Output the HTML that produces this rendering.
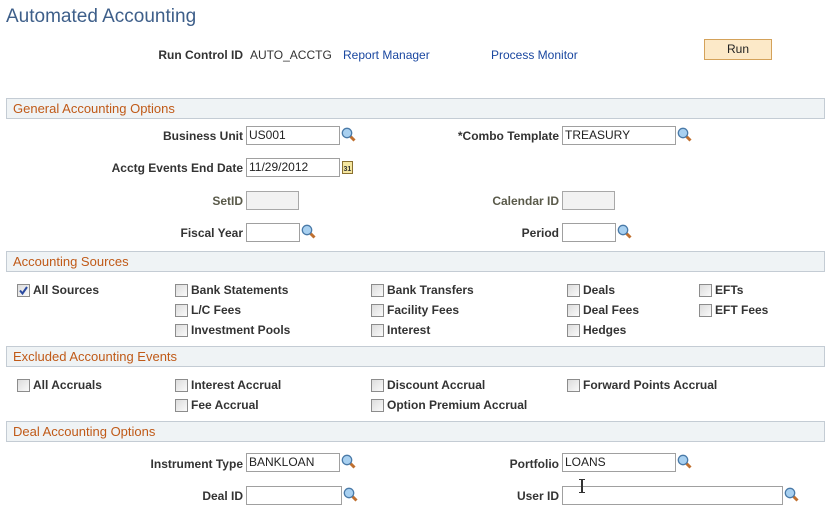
<!DOCTYPE html>
<html><head><style>
body{margin:0;width:834px;height:511px;background:#fff;font-family:"Liberation Sans",Arial,sans-serif;position:relative;overflow:hidden}
.a{position:absolute;white-space:nowrap}
.t{left:6px;top:6px;font-size:19px;color:#3e5f8a}
.lb{font-size:12px;font-weight:bold;color:#333;text-align:right}
.dl{color:#5a5a4a}
.v{font-size:12px;color:#333}
.lk{font-size:12px;color:#1a47a0}
.h{left:6px;width:817px;height:19px;background:#eff3f5;border:1px solid #c4ccd4;font-size:13px;color:#c05a18;line-height:19px;text-indent:6px}
.in{border:1px solid #a0a0a0;background:#fff;font-size:12px;color:#222;line-height:17px;padding-left:2px;box-sizing:border-box;height:19px}
.dis{background:#f2f2f2;border-color:#a8a8a8}
.cb{width:11px;height:11px;border:1px solid #8c8c8c;background:linear-gradient(135deg,#dcdcdc,#fafafa)}
.ct{font-size:12px;font-weight:bold;color:#333}
.run{left:704px;top:39px;width:66px;height:19px;background:#fce9c8;border:1px solid #d4a25a;font-size:12px;text-align:center;line-height:19px;color:#222}
</style></head><body>
<div class="a t">Automated Accounting</div>
<div class="a lb" style="right:591px;top:48px">Run Control ID</div>
<div class="a v" style="left:250px;top:48px">AUTO_ACCTG</div>
<div class="a lk" style="left:343px;top:48px">Report Manager</div>
<div class="a lk" style="left:491px;top:48px">Process Monitor</div>
<div class="a run">Run</div>

<div class="a h" style="top:98px">General Accounting Options</div>
<div class="a lb" style="right:591px;top:129px">Business Unit</div>
<div class="a in" style="left:246px;top:126px;width:94px">US001</div>
<div class="a lb" style="right:275px;top:129px">*Combo Template</div>
<div class="a in" style="left:562px;top:126px;width:114px">TREASURY</div>
<div class="a lb" style="right:591px;top:161px">Acctg Events End Date</div>
<div class="a in" style="left:246px;top:158px;width:94px">11/29/2012</div>
<svg class="a" style="left:342px;top:160px" width="12" height="14"><rect x="0.5" y="1.5" width="10" height="12" fill="#f5e7a0" stroke="#8a7030"/><text x="1.5" y="11" font-size="7" font-weight="bold" font-family="Liberation Sans" fill="#333">31</text></svg>
<div class="a lb dl" style="right:591px;top:194px">SetID</div>
<div class="a in dis" style="left:246px;top:191px;width:53px"></div>
<div class="a lb dl" style="right:275px;top:194px">Calendar ID</div>
<div class="a in dis" style="left:562px;top:191px;width:53px"></div>
<div class="a lb" style="right:591px;top:226px">Fiscal Year</div>
<div class="a in" style="left:246px;top:223px;width:54px"></div>
<div class="a lb" style="right:275px;top:226px">Period</div>
<div class="a in" style="left:562px;top:223px;width:54px"></div>

<div class="a h" style="top:251px">Accounting Sources</div>
<div class="a h" style="top:346px">Excluded Accounting Events</div>
<div class="a h" style="top:421px">Deal Accounting Options</div>

<div class="a lb" style="right:591px;top:457px">Instrument Type</div>
<div class="a in" style="left:246px;top:453px;width:94px">BANKLOAN</div>
<div class="a lb" style="right:275px;top:457px">Portfolio</div>
<div class="a in" style="left:562px;top:453px;width:114px">LOANS</div>
<div class="a lb" style="right:591px;top:489px">Deal ID</div>
<div class="a in" style="left:246px;top:486px;width:96px"></div>
<div class="a lb" style="right:275px;top:489px">User ID</div>
<div class="a in" style="left:562px;top:486px;width:221px"></div>
<svg class="a" style="left:578px;top:479px" width="8" height="14"><path d="M1 0.5H3.5V13.5H1M7 0.5H4.5V13.5H7" stroke="#333" fill="none"/></svg>

<div id="cbs"></div>
<script>
var items=[
[17,283,'All Sources',1],[175,283,'Bank Statements'],[371,283,'Bank Transfers'],[567,283,'Deals'],[699,283,'EFTs'],
[175,303,'L/C Fees'],[371,303,'Facility Fees'],[567,303,'Deal Fees'],[699,303,'EFT Fees'],
[175,323,'Investment Pools'],[371,323,'Interest'],[567,323,'Hedges'],
[17,378,'All Accruals'],[175,378,'Interest Accrual'],[371,378,'Discount Accrual'],[567,378,'Forward Points Accrual'],
[175,398,'Fee Accrual'],[371,398,'Option Premium Accrual']];
var h='';
items.forEach(function(i){
h+='<div class="a cb" style="left:'+i[0]+'px;top:'+(i[1]+1)+'px">'+(i[3]?'<svg width="11" height="11" style="display:block"><path d="M2 5.5 L4.5 8.5 L9 2" stroke="#2a4aa0" stroke-width="2" fill="none"/></svg>':'')+'</div>';
h+='<div class="a ct" style="left:'+(i[0]+16)+'px;top:'+i[1]+'px">'+i[2]+'</div>';});
var mags=[[341,127],[677,127],[301,224],[617,224],[341,454],[677,454],[343,487],[784,487]];
mags.forEach(function(m){h+='<svg class="a" style="left:'+m[0]+'px;top:'+m[1]+'px" width="15" height="15"><line x1="9" y1="9" x2="13.5" y2="13.5" stroke="#c07030" stroke-width="3"/><circle cx="6" cy="6" r="4.7" fill="#a8d0f0" stroke="#4a7aa8" stroke-width="1.3"/></svg>';});
document.getElementById('cbs').innerHTML=h;
</script>
</body></html>
